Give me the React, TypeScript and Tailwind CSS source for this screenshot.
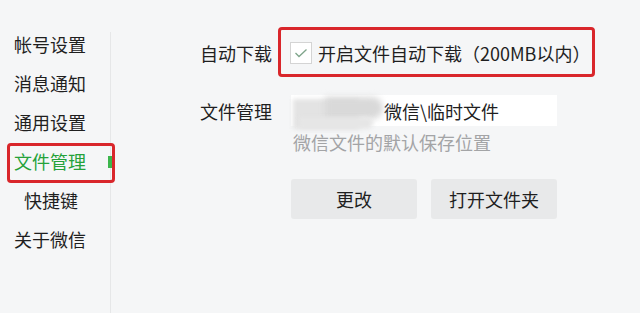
import React from "react";

const font = { fontFamily: '"Noto Sans CJK SC", "Noto Sans", sans-serif' };

function NavItem({ label, active, indent }: { label: string; active?: boolean; indent?: boolean }) {
  return (
    <div
      className={`relative flex h-[39px] items-center text-[18px] leading-[22px] ${indent ? "pl-[24px]" : "pl-[14px]"} ${
        active ? "text-[#25a23a]" : "text-[#1f1f1f]"
      }`}
    >
      {label}
      {active && (
        <>
          <div className="absolute left-[108px] top-[15px] h-[12px] w-[4px] bg-[#3cb64c]" />
          <div className="absolute left-[7px] top-[2px] h-[40px] w-[108px] rounded-[4px] border-[3px] border-[#d9262b]" />
        </>
      )}
    </div>
  );
}

export default function App() {
  return (
    <div className="flex h-[313px] w-[640px] overflow-hidden bg-[#f5f6f7]" style={font}>
      <div className="flex">
        <div className="w-[110px] pt-[24px]">
          <NavItem label="帐号设置" />
          <NavItem label="消息通知" />
          <NavItem label="通用设置" />
          <NavItem label="文件管理" active />
          <NavItem label="快捷键" indent />
          <NavItem label="关于微信" />
        </div>
        <div className="mt-[32px] w-px bg-[#e6e7e8]" />
      </div>

      <div className="flex flex-col pl-[89px] pt-[42px] text-[#1f1f1f]">
        <div className="relative flex h-[22px] items-center">
          <div className="w-[90px] text-[18px] leading-[22px]">自动下载</div>
          <div className="flex h-[22px] w-[22px] items-center justify-center border border-[#d4d4d4] bg-white">
            <svg width="14" height="10" viewBox="0 0 14 10" fill="none">
              <polyline points="1.5,5 5,8.5 12.5,1.5" stroke="#7fa58b" strokeWidth="1.3" />
            </svg>
          </div>
          <div className="ml-[6px] whitespace-nowrap text-[18px] leading-[22px]">开启文件自动下载（200MB以内）</div>
          <div className="absolute left-[78px] top-[-15px] h-[50px] w-[317px] rounded-[4px] border-[3px] border-[#d9262b]" />
        </div>

        <div className="mt-[31px] flex h-[31px] items-center">
          <div className="w-[91px] text-[18px] leading-[22px]">文件管理</div>
          <div className="relative flex h-[31px] w-[266px] items-center bg-white">
            <div className="relative h-[31px] w-[93px] shrink-0">
              <div className="absolute left-[2px] top-[4px] h-[30px] w-[66px] bg-[#e3e3e3] blur-[2px]" />
              <div className="absolute left-[34px] top-[2px] h-[22px] w-[58px] rounded-r-full bg-[#d9d9d9] blur-[3px]" />
              <div className="absolute left-[8px] top-[22px] h-[12px] w-[74px] rounded-r-full bg-[#e6e6e6] blur-[2px]" />
            </div>
            <span className="whitespace-nowrap text-[18px] leading-[22px]">微信\临时文件</span>
          </div>
        </div>

        <div className="ml-[93px] mt-[5px] text-[18px] leading-[22px] text-[#a3a4a6]">微信文件的默认保存位置</div>

        <div className="ml-[91px] mt-[26px] flex gap-[14px]">
          <button className="h-[40px] w-[126px] rounded-[3px] bg-[#e8e9ea] text-[18px] text-[#1f1f1f]">更改</button>
          <button className="h-[40px] w-[126px] rounded-[3px] bg-[#e8e9ea] text-[18px] text-[#1f1f1f]">打开文件夹</button>
        </div>
      </div>
    </div>
  );
}
